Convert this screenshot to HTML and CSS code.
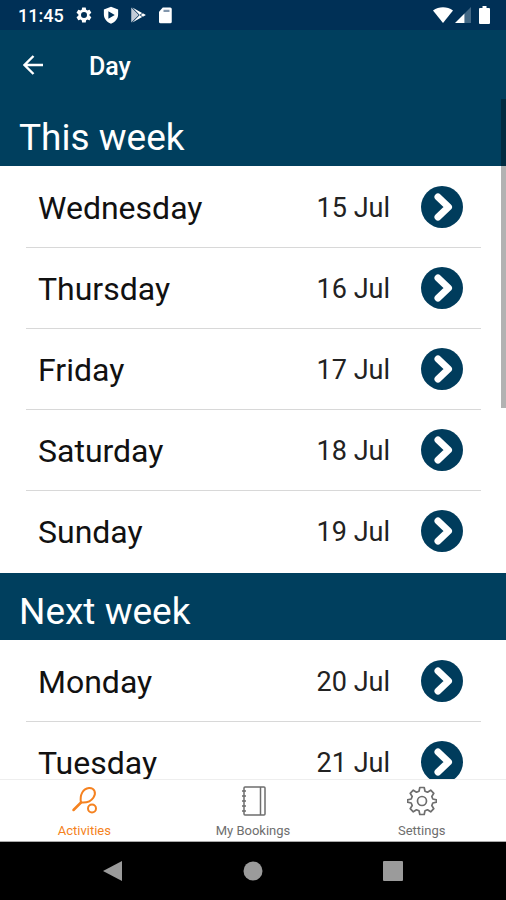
FILE: index.html
```html
<!DOCTYPE html>
<html lang="en">
<head>
	<meta charset="utf-8">
	<meta name="viewport" content="width=device-width, initial-scale=1">
	<title>Day</title>
	<link rel="stylesheet" href="styles.css">
</head>
<body>
	<svg class="defs" width="0" height="0">
		<symbol id="go" viewBox="0 0 42 42">
			<circle cx="21" cy="21" r="21" fill="#003c5c"/>
			<path d="M17 11l10.500 10L17 31" fill="none" stroke="#fff" stroke-width="7" stroke-linecap="round" stroke-linejoin="round"/>
		</symbol>
	</svg>

	<div class="status">
		<span class="time">11:45</span>
		<svg width="18" height="18" viewBox="0 0 24 24"><path fill="#fff" fill-rule="evenodd" d="M19.400 13a7.800 7.800 0 0 0 0-2l2.100-1.600a.5.5 0 0 0 .1-.7l-2-3.400a.5.5 0 0 0-.6-.2l-2.500 1a7.300 7.300 0 0 0-1.700-1l-.4-2.700a.5.5 0 0 0-.5-.4h-4a.5.5 0 0 0-.5.400L9 5.100a7.700 7.700 0 0 0-1.700 1l-2.500-1a.5.5 0 0 0-.6.2l-2 3.400a.5.5 0 0 0 .1.700L4.500 11a8 8 0 0 0 0 2l-2.200 1.600a.5.5 0 0 0-.1.700l2 3.400c.1.200.4.300.6.200l2.500-1c.5.400 1.100.8 1.700 1l.4 2.700c0 .2.200.4.500.4h4c.3 0 .5-.2.500-.4l.4-2.700a7.300 7.300 0 0 0 1.700-1l2.500 1c.2.100.5 0 .6-.2l2-3.400a.5.5 0 0 0-.1-.7zM12 16a4 4 0 1 1 0-8 4 4 0 0 1 0 8z"/></svg>
		<svg width="18" height="18" viewBox="0 0 24 24"><path fill="#fff" fill-rule="evenodd" d="M12 1l9.500 3.500V11c0 6-4 10.500-9.500 12.500C6.500 21.500 2.500 17 2.500 11V4.500zM8.500 7v10l8.500-5z"/></svg>
		<svg width="18" height="18" viewBox="0 0 24 24"><path fill="#c3ccd8" d="M3 2v20l10-10z"/><path fill="#fff" d="M4.500 2l13 7.200-3.200 2.800zM4.500 22l13-7.200-3.200-2.800zM18.500 9.700l4 2.300-4 2.300-2.700-2.300z"/></svg>
		<svg width="18" height="18" viewBox="0 0 24 24"><path fill="#fff" d="M9 2h10a2 2 0 0 1 2 2v17a2 2 0 0 1-2 2H6a2 2 0 0 1-2-2V7.500z"/><path fill="#8296ac" d="M10 5h8v3h-8z"/></svg>
		<span class="signals">
			<svg width="20" height="16" viewBox="0 0 20 16"><path fill="#fff" d="M0 3.500C6-.8 14-.8 20 3.500L10 16z"/></svg>
			<svg width="16" height="16" viewBox="0 0 16 16"><path fill="#426784" d="M9.500 6.500L16 0v16H9.500z"/><path fill="#fff" d="M0 16l9.500-9.500V16z"/></svg>
			<svg width="11" height="18" viewBox="0 0 11 18"><path fill="#fff" d="M3.500 0h4v2H10a1 1 0 0 1 1 1v14a1 1 0 0 1-1 1H1a1 1 0 0 1-1-1V3a1 1 0 0 1 1-1h2.500z"/></svg>
		</span>
	</div>

	<header class="appbar">
		<button class="back" aria-label="Back">
			<svg width="20" height="20" viewBox="0 0 20 20"><path d="M20 10H1.500M10.500 1L1.500 10l9 9" fill="none" stroke="#fff" stroke-width="2.400"/></svg>
		</button>
		<h1>Day</h1>
	</header>

	<main class="content">
		<div class="weeks">
			<h2>This week</h2>
			<ul class="days">
				<li><a href="#15"><span class="name">Wednesday</span><span class="date">15 Jul</span><svg class="go"><use href="#go"/></svg></a></li>
				<li><a href="#16"><span class="name">Thursday</span><span class="date">16 Jul</span><svg class="go"><use href="#go"/></svg></a></li>
				<li><a href="#17"><span class="name">Friday</span><span class="date">17 Jul</span><svg class="go"><use href="#go"/></svg></a></li>
				<li><a href="#18"><span class="name">Saturday</span><span class="date">18 Jul</span><svg class="go"><use href="#go"/></svg></a></li>
				<li><a href="#19"><span class="name">Sunday</span><span class="date">19 Jul</span><svg class="go"><use href="#go"/></svg></a></li>
			</ul>
			<h2>Next week</h2>
			<ul class="days">
				<li><a href="#20"><span class="name">Monday</span><span class="date">20 Jul</span><svg class="go"><use href="#go"/></svg></a></li>
				<li><a href="#21"><span class="name">Tuesday</span><span class="date">21 Jul</span><svg class="go"><use href="#go"/></svg></a></li>
			</ul>
		</div>
		<div class="scrollbar"></div>
	</main>

	<nav class="tabs">
		<a class="tab active" href="#activities">
			<svg width="30" height="30" viewBox="0 0 30 30" fill="none" stroke="currentColor" stroke-width="2">
				<path d="M12 16.500C10.500 9 14 2.500 20 2c5.500-.3 7.500 5 4.500 9.500-2.500 4-7 5.500-12.500 5z"/>
				<path d="M12 16.500L4.500 24" stroke-width="2.500" stroke-linecap="round"/>
				<circle cx="23" cy="22.500" r="4"/>
			</svg>
			Activities
		</a>
		<a class="tab" href="#bookings">
			<svg width="30" height="30" viewBox="0 0 30 30" fill="none" stroke="currentColor" stroke-width="1.500">
				<rect x="6" y="1" width="21" height="28" rx="1"/>
				<path d="M22.500 1v28M4 5h4M4 10h4M4 15h4M4 20h4M4 25h4"/>
			</svg>
			My Bookings
		</a>
		<a class="tab" href="#settings">
			<svg width="30" height="30" viewBox="0 0 30 30" fill="none" stroke="currentColor" stroke-width="1.700" stroke-linejoin="round">
				<path d="M12.800 1.500h4.400l.8 3.700 2.500 1 3.200-2 3.100 3.100-2 3.200 1 2.500 3.700.8v2.400l-3.700.8-1 2.500 2 3.200-3.100 3.100-3.200-2-2.500 1-.8 3.700h-4.400l-.8-3.700-2.500-1-3.200 2-3.100-3.100 2-3.200-1-2.500-3.700-.8v-2.400l3.700-.8 1-2.500-2-3.200 3.100-3.100 3.200 2 2.500-1z"/>
				<circle cx="15" cy="15" r="4.500"/>
			</svg>
			Settings
		</a>
	</nav>

	<div class="sysnav">
		<button aria-label="Back"><svg width="20" height="20" viewBox="0 0 20 20"><path d="M0 10L19 0v20z"/></svg></button>
		<button aria-label="Home"><svg width="20" height="20" viewBox="0 0 20 20"><circle cx="10" cy="10" r="9.500"/></svg></button>
		<button aria-label="Overview"><svg width="20" height="20" viewBox="0 0 20 20"><rect width="20" height="20" rx="1"/></svg></button>
	</div>
</body>
</html>
```
FILE: styles.css
```css
* {
	box-sizing: border-box;
}
body {
	display: flex;
	flex-direction: column;
	height: 100vh;
	margin: 0;
	font-family: Roboto, "Liberation Sans", sans-serif;
	background: #fff;
	color: #111;
}
h1, h2, ul {
	margin: 0;
	padding: 0;
}
a {
	color: inherit;
	text-decoration: none;
}
button {
	padding: 0;
	border: 0;
	background: none;
}
svg {
	display: block;
	flex: none;
}
.defs {
	position: absolute;
}

/* Android status bar */
.status {
	display: flex;
	flex: none;
	align-items: center;
	gap: 9px;
	height: 30px;
	padding: 0 16px 0 18px;
	background: #003056;
	color: #fff;
}
.time {
	margin-right: 2px;
	font-size: 18px;
	font-weight: 500;
}
.signals {
	display: flex;
	align-items: center;
	gap: 2px;
	margin-left: auto;
}
.signals svg:last-child {
	margin-left: 6px;
}

.appbar {
	display: flex;
	flex: none;
	align-items: center;
	gap: 46px;
	height: 69px;
	padding-left: 23px;
	background: #003f5e;
	color: #fff;
}
.appbar h1 {
	padding-top: 3px;
	font-size: 25px;
	font-weight: 500;
}

.content {
	position: relative;
	flex: 1;
	min-height: 0;
}
.weeks {
	height: 100%;
	overflow: hidden;
}
.weeks h2 {
	height: 67px;
	padding: 5px 19px 0;
	background: #003f5e;
	color: #fff;
	font-size: 37px;
	font-weight: 400;
	line-height: 67px;
}
.days {
	padding: 1px 25px 1px 26px;
	list-style: none;
}
.days li {
	height: 81px;
	border-bottom: 1px solid #d8d8d8;
}
.days li:last-child {
	border-bottom: 0;
}
.days a {
	display: flex;
	align-items: center;
	height: 80px;
	padding: 0 18px 0 12px;
}
.name,
.date {
	padding-top: 2px;
}
.name {
	flex: 1;
	font-size: 32px;
}
.date {
	margin-right: 31px;
	color: #222;
	font-size: 27px;
}
.go {
	width: 42px;
	height: 42px;
}
.scrollbar {
	position: absolute;
	top: 0;
	right: 0;
	width: 5px;
	height: 309px;
	background: rgba(0, 0, 0, 0.3);
}

.tabs {
	display: flex;
	flex: none;
	height: 63px;
	border-top: 1px solid #eee;
	border-bottom: 1px solid #aaa;
}
.tab {
	display: flex;
	flex: 1;
	flex-direction: column;
	align-items: center;
	gap: 7px;
	padding-top: 6px;
	color: #6e6e6e;
	font-size: 13px;
}
.tab.active {
	color: #f58220;
}

/* Android navigation keys */
.sysnav {
	display: flex;
	flex: none;
	justify-content: center;
	gap: 120px;
	height: 58px;
	background: #000;
}
.sysnav svg {
	fill: #9b9b9b;
}
```
